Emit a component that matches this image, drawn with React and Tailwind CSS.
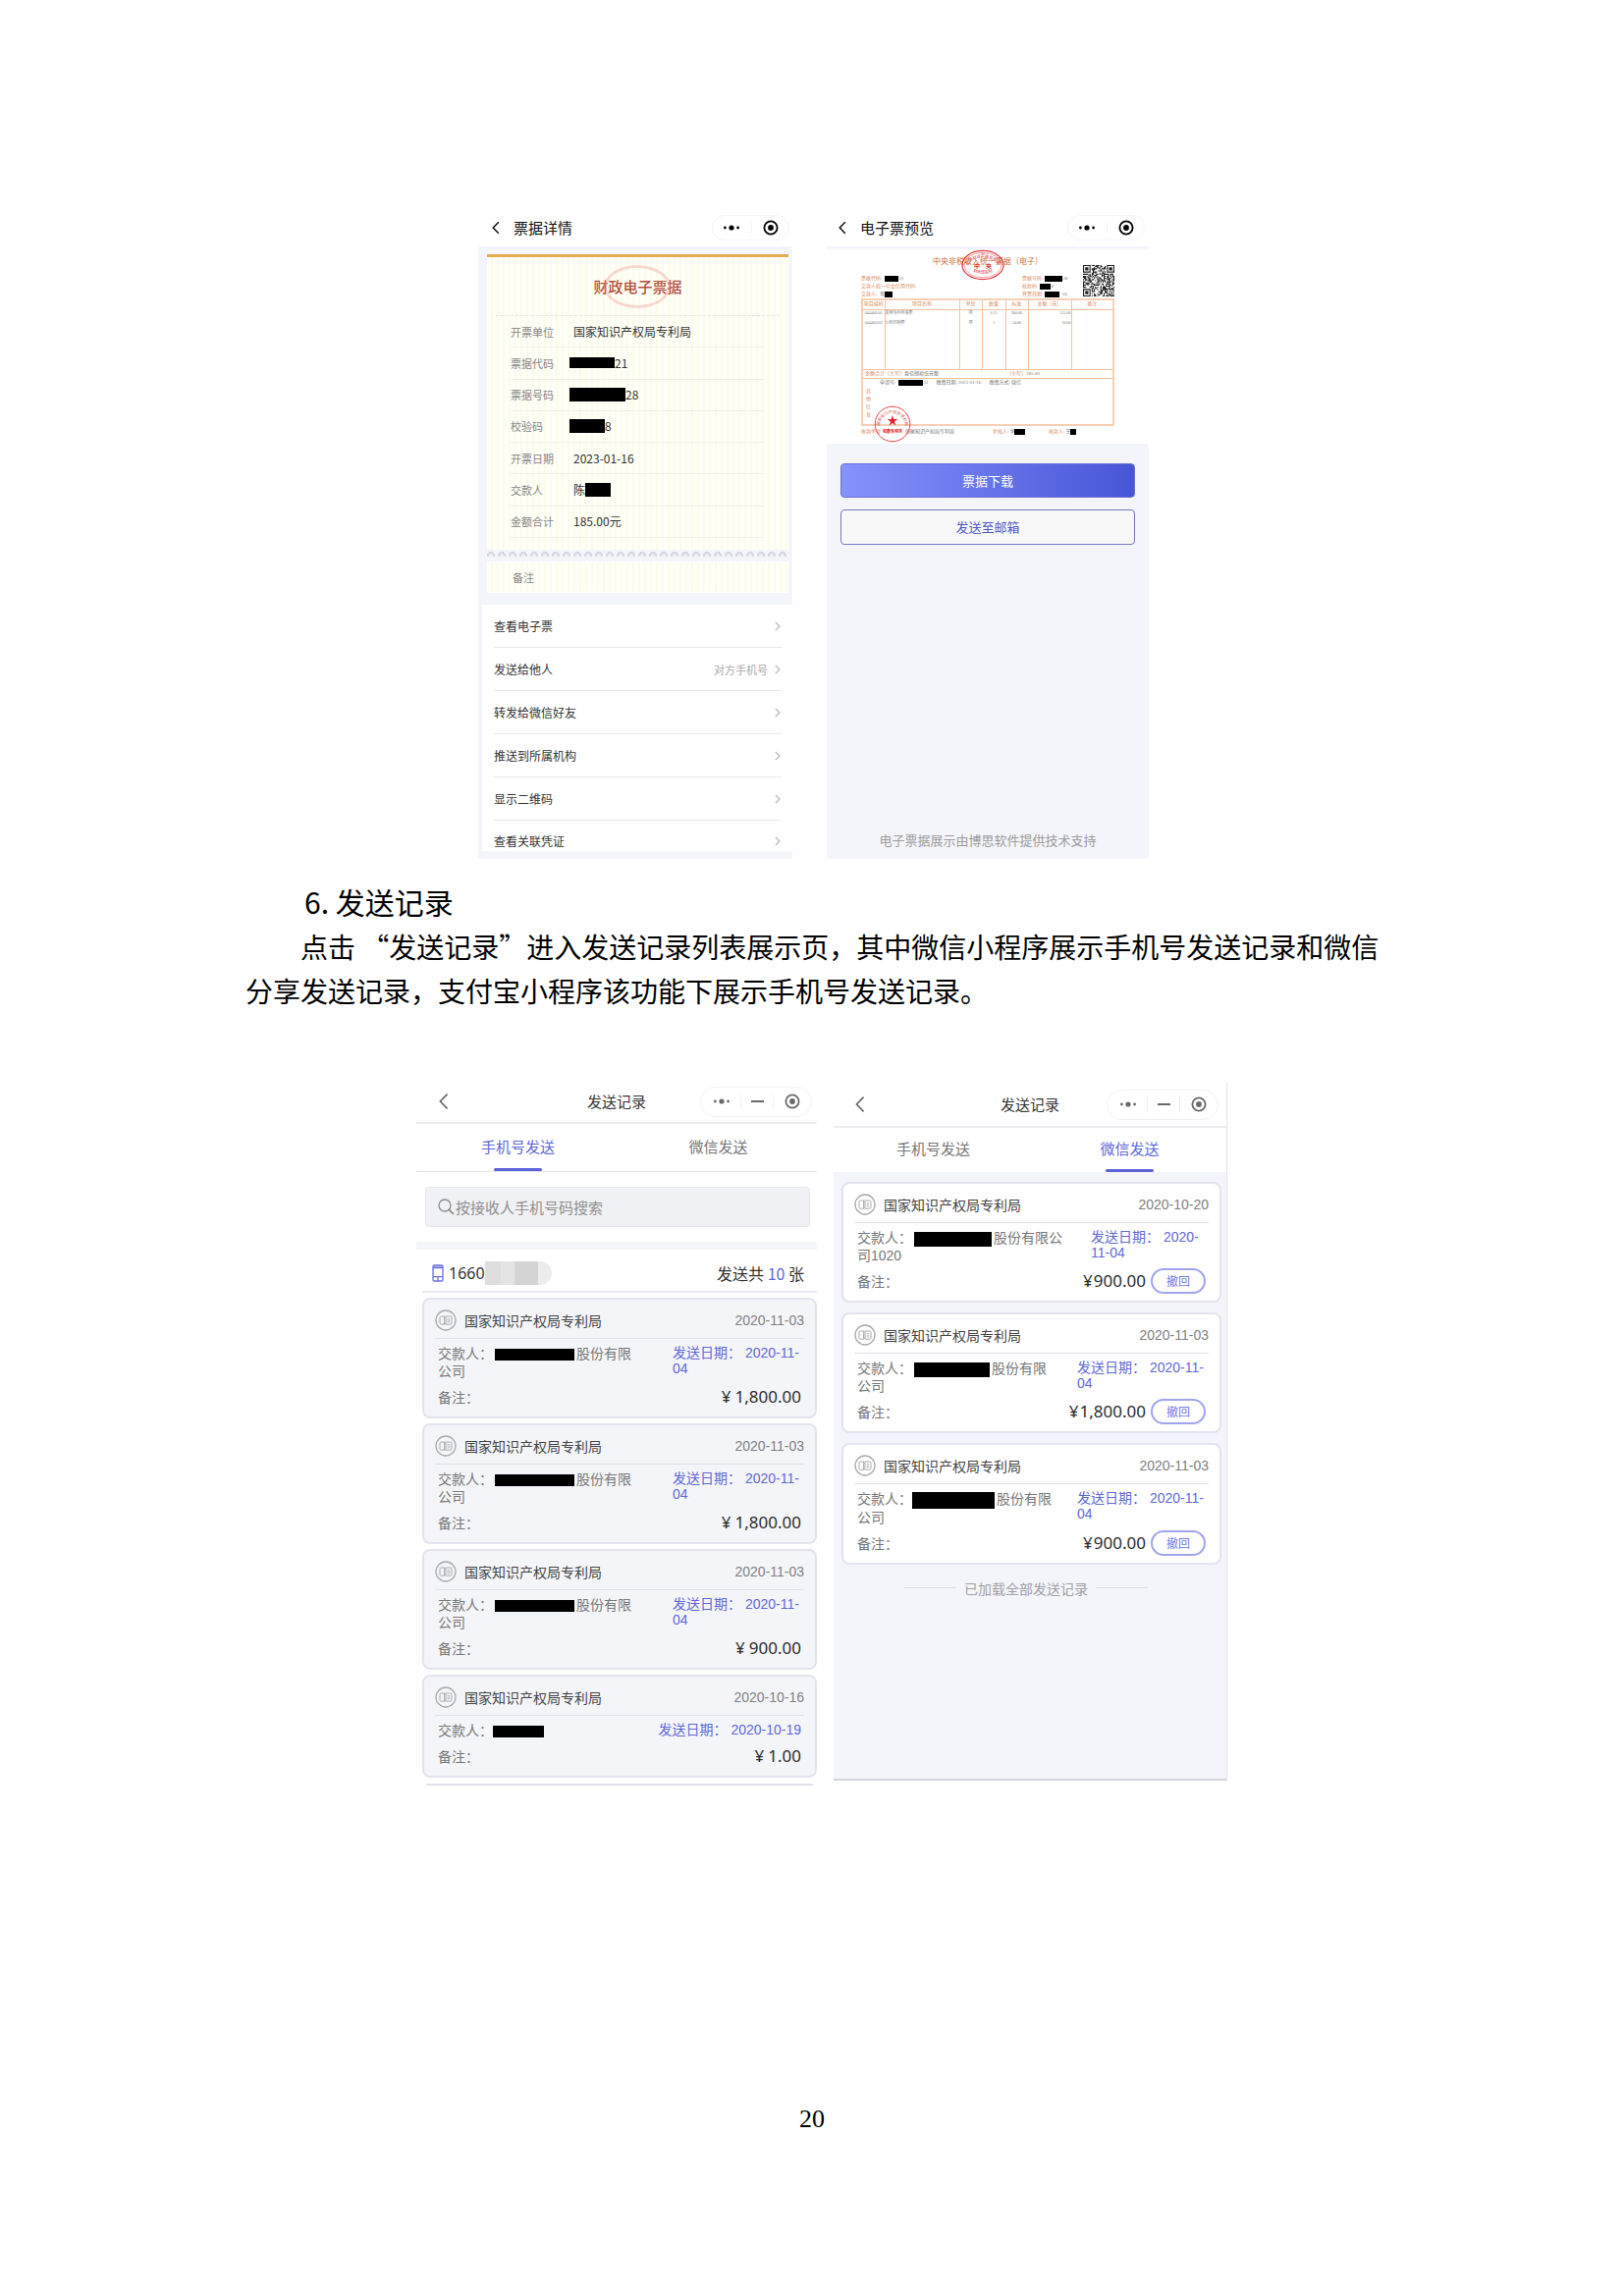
import React from "react";

const Redacted = ({ className }) => (
  <span className={"inline-block shrink-0 bg-black " + className} aria-hidden="true" />
);

const Target = ({ className }) => (
  <svg viewBox="0 0 18 18" className={"size-[18px] shrink-0 " + className} aria-hidden="true">
    <circle cx="9" cy="9" r="6.6" fill="none" stroke="currentColor" strokeWidth="1.8" />
    <circle cx="9" cy="9" r="2.9" fill="currentColor" />
  </svg>
);

const Dots = ({ className }) => (
  <svg viewBox="0 0 18 8" className={"h-2 w-[18px] shrink-0 " + className} aria-hidden="true">
    <circle cx="2.4" cy="4" r="1.4" fill="currentColor" />
    <circle cx="9" cy="4" r="2.6" fill="currentColor" />
    <circle cx="15.6" cy="4" r="1.4" fill="currentColor" />
  </svg>
);

const Back = ({ className }) => (
  <svg viewBox="0 0 10 18" className={"shrink-0 " + className} fill="none" stroke="currentColor" aria-hidden="true">
    <path d="M8.6 1.6 L1.4 9 L8.6 16.4" strokeWidth="1.7" />
  </svg>
);

const Next = () => (
  <svg viewBox="0 0 6 10" className="h-[10px] w-[6px] shrink-0 text-[#b5b5b5]" fill="none" stroke="currentColor" aria-hidden="true">
    <path d="M0.8 0.8 L5 5 L0.8 9.2" strokeWidth="1.2" />
  </svg>
);

/* ---------- invoice detail ---------- */

const details = [
  { label: "开票单位", pre: "国家知识产权局专利局" },
  { label: "票据代码", box: "h-[11px] w-[46px]", post: "21" },
  { label: "票据号码", box: "h-[14px] w-[57px]", post: "28" },
  { label: "校验码", box: "h-[14px] w-[36px]", post: "8" },
  { label: "开票日期", pre: "2023-01-16" },
  { label: "交款人", pre: "陈", box: "h-[14px] w-[26px]" },
  { label: "金额合计", pre: "185.00元" },
];

const actions = ["查看电子票", "发送给他人", "转发给微信好友", "推送到所属机构", "显示二维码", "查看关联凭证"];

const stripes =
  "bg-[repeating-linear-gradient(90deg,#fffffa_0px,#fffffa_4px,#fcfce6_4px,#fcfce6_6px)]";

function SmallHeader({ title, className }) {
  return (
    <header className={"flex h-[39px] items-center bg-white text-black " + className}>
      <button aria-label="返回" className="flex">
        <Back className="h-[14px] w-[8px]" />
      </button>
      <h2 className="ml-[14px] flex-1 text-[15px] leading-5 text-[#111]">{title}</h2>
      <div className="flex h-[26px] w-[79px] items-center justify-between rounded-full border border-[#f4f4f4] pr-[9px] pl-[10px]">
        <button aria-label="更多" className="flex"><Dots /></button>
        <span className="h-3 w-px bg-[#f2f2f2]" />
        <button aria-label="关闭" className="flex"><Target /></button>
      </div>
    </header>
  );
}

function InvoiceDetail() {
  return (
    <section className="w-full max-w-[320px] bg-[#f4f5fa] pb-2">
      <SmallHeader title="票据详情" className="pr-[3px] pl-[14px]" />
      <div className="mr-1 ml-[9px] pt-2">
        <div className={"border-t-3 border-[#e6ad55] " + stripes}>
          <div className="mx-[9px] flex h-[60px] items-center justify-center border-b border-dashed border-[#e4e4d8]">
            <div className="relative">
              <h3 className="text-[15px] leading-5 font-medium text-[#b5503f]">财政电子票据</h3>
              <span className="absolute top-1/2 left-1/2 h-[44px] w-[68px] -translate-x-1/2 -translate-y-1/2 rounded-[50%] border-3 border-[#ef8f86]/35" />
            </div>
          </div>
          <dl className="mr-[25px] ml-6 grid h-[226px] grid-rows-7">
            {details.map((d) => (
              <div key={d.label} className="flex items-center border-b border-[#f0f0e6]">
                <dt className="w-[60px] text-[11px] leading-4 text-[#858585]">{d.label}</dt>
                <dd className={"flex items-center text-[12px] leading-4 text-[#333] " + (d.pre ? "pl-1" : "")}>
                  {d.pre}
                  {d.box && <Redacted className={d.box} />}
                  {d.post}
                </dd>
              </div>
            ))}
          </dl>
          <div className="h-3" />
        </div>
        <div className="h-3 pt-[2px]">
          <div className="h-[5px] bg-[radial-gradient(circle_at_4px_4px,#eeeef4_0px,#eeeef4_2px,#d6d7e2_2px,#d6d7e2_4px,transparent_4px)] bg-[length:11px_5px] bg-repeat-x" />
        </div>
        <div className={"flex h-8 items-center border-y border-white pl-[26px] text-[11px] text-[#858585] " + stripes}>备注</div>
      </div>
      <ul className="mt-3 ml-1 bg-white pr-[11px] pl-3">
        {actions.map((a) => (
          <li key={a} className="group border-b border-[#e8e8e8] last:border-b-0">
            <button className="flex h-[43px] w-full items-center justify-between text-[12px] leading-4 text-[#333] group-last:h-[31px] group-last:pt-[11px]">
              {a}
              <span className="flex items-center gap-[7px] pr-px text-[11px] text-[#aaa]">
                {a === "发送给他人" && "对方手机号"}
                <Next />
              </span>
            </button>
          </li>
        ))}
      </ul>
    </section>
  );
}

/* ---------- invoice preview ---------- */

const QR_SIZE = 29;
const qrCells = (() => {
  const cells = [];
  let seed = 77;
  const finder = (x, y) => {
    for (const [fx, fy] of [[0, 0], [QR_SIZE - 7, 0], [0, QR_SIZE - 7]]) {
      const dx = x - fx;
      const dy = y - fy;
      if (dx >= -1 && dx <= 7 && dy >= -1 && dy <= 7) {
        if (dx < 0 || dy < 0 || dx > 6 || dy > 6) return 0;
        if (dx === 0 || dy === 0 || dx === 6 || dy === 6) return 1;
        return dx >= 2 && dx <= 4 && dy >= 2 && dy <= 4 ? 1 : 0;
      }
    }
    return -1;
  };
  for (let y = 0; y < QR_SIZE; y++) {
    for (let x = 0; x < QR_SIZE; x++) {
      seed = (seed * 1103515245 + 12345) % 2147483648;
      const f = finder(x, y);
      if (f === 1 || (f === -1 && seed / 2147483648 > 0.46)) cells.push(`M${x} ${y}h1v1h-1z`);
    }
  }
  return cells.join("");
})();

const OvalSeal = () => (
  <svg viewBox="0 0 44 32" className="h-8 w-11" fill="none" stroke="#e0383e" aria-hidden="true">
    <ellipse cx="22" cy="16" rx="21" ry="14.6" strokeWidth="1.2" />
    <ellipse cx="22" cy="16" rx="19" ry="12.7" strokeWidth="0.5" />
    <path id="ovalTop" d="M7 17 A15 8.6 0 0 1 37 17" stroke="none" />
    <path id="ovalBottom" d="M8 20 A15.5 8 0 0 0 36 20" stroke="none" />
    <g fill="#e0383e" stroke="none" fontSize="4">
      <text><textPath href="#ovalTop" startOffset="50%" textAnchor="middle">全国财政票据监制章</textPath></text>
      <text x="22" y="18.5" textAnchor="middle" fontSize="6" fontWeight="700">中　央</text>
      <text><textPath href="#ovalBottom" startOffset="50%" textAnchor="middle">财政部监制</textPath></text>
    </g>
  </svg>
);

const RoundSeal = () => (
  <svg viewBox="0 0 38 38" className="size-[38px]" fill="none" stroke="#e8474c" aria-hidden="true">
    <circle cx="19" cy="19" r="17.8" strokeWidth="1" />
    <path id="roundTop" d="M6.6 25 A13 13 0 1 1 31.4 25" stroke="none" />
    <path d="M19 10 L20.3 14 L24.4 14 L21 16.4 L22.3 20.4 L19 17.9 L15.7 20.4 L17 16.4 L13.6 14 L17.7 14 Z" fill="#e2232a" stroke="none" />
    <g fill="#e8474c" stroke="none" fontSize="4">
      <text><textPath href="#roundTop" startOffset="50%" textAnchor="middle">国家知识产权局专利局</textPath></text>
      <text x="19" y="28" textAnchor="middle" fontWeight="700" fill="#e2232a">收费专用章</text>
    </g>
  </svg>
);

const cell = "border-x border-[#f3c3a2] p-0 align-top font-normal";

function Receipt() {
  return (
    <div className="bg-white px-[35px] pt-2 pb-[9px] font-['Liberation_Serif','Noto_Sans_CJK_SC',serif] text-[5px] leading-[8px] text-[#d98a5c]">
      <div className="relative">
        <h3 className="text-center text-[8px] leading-[10px] text-[#c8703c]">中央非税收入统一票据（电子）</h3>
        <div className="absolute -top-2 left-[48%] -translate-x-1/2"><OvalSeal /></div>
      </div>
      <div className="flex h-8 items-end">
        <div className="flex-1">
          <p className="flex items-center">票据代码:<Redacted className="ml-[3px] h-[6px] w-[14px]" /><span className="text-[#777]">31</span></p>
          <p>交款人统一社会信用代码:</p>
          <p className="flex items-center">交款人:<span className="ml-[3px] text-[#777]">陈</span><Redacted className="h-[6px] w-2" /></p>
        </div>
        <div className="w-[62px]">
          <p className="flex items-center">票据号码:<Redacted className="ml-[2px] h-[6px] w-[18px]" /><span className="text-[#777]">28</span></p>
          <p className="flex items-center">校验码:<Redacted className="ml-[2px] h-[6px] w-[11px]" /><span className="text-[#777]">8</span></p>
          <p className="flex items-center">开票日期:<Redacted className="ml-[2px] h-[6px] w-[15px]" /><span className="ml-px text-[#777]">-16</span></p>
        </div>
        <div className="h-[34px] w-8 shrink-0">
          <svg viewBox="0 0 29 29" className="size-8" role="img" aria-label="二维码">
            <path d={qrCells} fill="#222" />
          </svg>
        </div>
      </div>
      <div className="relative">
        <div className="border-2 border-[#f6cfb4]">
          <table className="w-full table-fixed border-collapse text-center">
            <colgroup>
              <col className="w-[22px]" /><col className="w-[76px]" /><col className="w-[23px]" />
              <col className="w-[24px]" /><col className="w-[23px]" /><col className="w-[44px]" /><col />
            </colgroup>
            <thead>
              <tr className="h-[9px] border-b border-[#f3c3a2]">
                {["项目编码", "项目名称", "单位", "数量", "标准", "金额（元）", "备注"].map((h) => (
                  <th key={h} className={cell + " border-l-0 last:border-r-0"}>{h}</th>
                ))}
              </tr>
            </thead>
            <tbody className="text-[4px] leading-[6px] text-[#777]">
              <tr className="h-[11px]">
                <td className={cell + " border-l-0"}>044400101</td>
                <td className={cell + " text-left"}>发明专利申请费</td>
                <td className={cell}>项</td><td className={cell}>0.15</td><td className={cell}>900.00</td>
                <td className={cell + " text-right"}>135.00</td><td className={cell + " border-r-0"} />
              </tr>
              <tr className="h-[50px]">
                <td className={cell + " border-l-0"}>044400102</td>
                <td className={cell + " text-left"}>公布印刷费</td>
                <td className={cell}>项</td><td className={cell}>1</td><td className={cell}>50.00</td>
                <td className={cell + " text-right"}>50.00</td><td className={cell + " border-r-0"} />
              </tr>
            </tbody>
          </table>
          <div className="flex h-[10px] items-center border-y border-[#f3c3a2] pl-[2px]">
            金额合计（大写）<span className="w-[104px] text-[#777]">壹佰捌拾伍元整</span>（小写）<span className="text-[#777]">185.00</span>
          </div>
          <div className="flex h-[46px] pl-[3px]">
            <div className="flex w-[14px] flex-col justify-center pt-[3px]">
              {["其", "他", "信", "息"].map((c) => <span key={c}>{c}</span>)}
            </div>
            <p className="flex h-[8px] items-center text-[#777]">
              申请号:<Redacted className="ml-[3px] h-[6px] w-[25px]" />31
              <span className="ml-2">缴费日期: 2023-01-16</span>
              <span className="ml-2">缴费方式: 微信</span>
            </p>
          </div>
        </div>
        <div className="absolute -bottom-[17px] left-[13px]"><RoundSeal /></div>
      </div>
      <div className="mt-[2px] flex h-[7px] items-center">
        <p className="w-[134px]">收款单位（章）<span className="ml-[10px] text-[#777]">国家知识产权局专利局</span></p>
        <p className="flex w-[57px] items-center">复核人:<span className="ml-px text-[#777]">李</span><Redacted className="h-[6px] w-[11px]" /></p>
        <p className="flex items-center">收款人:<span className="ml-px text-[#777]">王</span><Redacted className="h-[6px] w-[6px]" /></p>
      </div>
    </div>
  );
}

function InvoicePreview() {
  return (
    <section className="flex w-full max-w-[328px] flex-col bg-[#f4f5fa]">
      <SmallHeader title="电子票预览" className="pr-1 pl-3" />
      <div className="pt-[3px]"><Receipt /></div>
      <div className="flex flex-1 flex-col px-[14px] pt-5">
        <button className="h-[35px] rounded border border-[#6a70d8] bg-linear-to-r from-[#8792fc] to-[#4756d6] text-[13px] text-white">票据下载</button>
        <button className="mt-3 h-[36px] rounded border border-[#7478c4] bg-[#f8f8f8] text-[13px] text-[#5058c8]">发送至邮箱</button>
        <p className="mt-auto pb-[9px] text-center text-[13px] leading-5 text-[#9a9a9a]">电子票据展示由博思软件提供技术支持</p>
      </div>
    </section>
  );
}

/* ---------- sending records ---------- */

function RecordsHeader({ className, backClassName }) {
  return (
    <header className={"grid grid-cols-[1fr_auto_1fr] items-center border-b-2 border-[#ececf0] bg-white text-[#6a6a6a] " + className}>
      <button aria-label="返回" className={"flex w-fit " + backClassName}>
        <Back className="h-[18px] w-[10px]" />
      </button>
      <h2 className="text-[15px] leading-5 text-[#333]">发送记录</h2>
      <div className="flex h-[31px] w-[114px] items-center justify-between justify-self-end rounded-full border border-[#f2f2f2] pr-[10px] pl-3">
        <button aria-label="更多" className="flex"><Dots /></button>
        <span className="h-4 w-px bg-[#efefef]" />
        <button aria-label="最小化" className="flex"><span className="h-[2px] w-[13px] bg-current" /></button>
        <span className="h-4 w-px bg-[#efefef]" />
        <button aria-label="关闭" className="flex"><Target /></button>
      </div>
    </header>
  );
}

function Tabs({ active, className }) {
  return (
    <div role="tablist" className={"grid grid-cols-2 bg-white " + className}>
      {["手机号发送", "微信发送"].map((t, i) => (
        <button
          key={t}
          role="tab"
          aria-selected={i === active}
          className={"flex flex-col items-center pl-[3px] text-[15px] leading-5 " + (i === active ? "text-[#5f68dc]" : "text-[#777]")}
        >
          <span className="flex flex-1 items-center">{t}</span>
          <span className={"h-[3px] w-[49px] rounded-full " + (i === active ? "bg-[#5b63d8]" : "bg-transparent")} />
        </button>
      ))}
    </div>
  );
}

const Badge = () => (
  <svg viewBox="0 0 22 22" className="size-[22px] shrink-0" fill="none" stroke="#a9a9ae" aria-hidden="true">
    <circle cx="11" cy="11" r="10" strokeWidth="1.3" />
    <path d="M9.6 7 H6.4 Q5 7 5 8.4 V13.8 Q5 15.2 6.4 15.2 H9.6 Z M9.6 7 L11 8 V14.2 L9.6 15.2 M11 7 H15.6 Q17 7 17 8.4 V13.8 Q17 15.2 15.6 15.2 H11" strokeWidth="1" />
    <path d="M12.6 9.6 H15.2 M12.6 11.2 H15.2 M12.6 12.8 H15.2" strokeWidth="0.8" />
  </svg>
);

function RecordCard({ date, box, payer, sent, sentWidth, payerWidth, amount, revocable }) {
  return (
    <article className={"rounded-lg border-2 border-[#e2e3ec] px-[11px] pt-[2px] pb-2 " + (revocable ? "bg-white" : "bg-[#f4f5f9]")}>
      <div className="flex h-[38px] items-center border-b border-[#dfe0e8]">
        <Badge />
        <h3 className="ml-2 flex-1 text-[14px] leading-5 text-[#444]">国家知识产权局专利局</h3>
        <time className="font-['Liberation_Sans','Noto_Sans_CJK_SC',sans-serif] text-[14px] leading-5 text-[#808080]">{date}</time>
      </div>
      <div className="flex justify-between px-[3px] pt-[6px] font-['Liberation_Sans','Noto_Sans_CJK_SC',sans-serif] text-[14px]">
        <p className={"leading-[18px] text-[#777] " + payerWidth}>
          交款人：<Redacted className={"mr-[2px] align-middle " + box} />{payer}
        </p>
        <p className={"leading-4 text-[#6068d8] " + sentWidth}>发送日期： {sent}</p>
      </div>
      <div className="mt-[5px] flex h-6 items-center justify-between px-[3px]">
        <p className="text-[14px] leading-5 text-[#777]">备注：</p>
        <div className="flex items-center gap-[5px]">
          <p className={"flex items-center font-['Noto_Sans',sans-serif] text-[17px] leading-6 text-[#2d2d2d] " + (revocable ? "gap-px" : "gap-1")}>
            <span>¥</span><span>{amount}</span>
          </p>
          {revocable && (
            <button className="h-[26px] w-14 rounded-full border-2 border-[#a0a4ee] text-[12px] leading-4 text-[#7479e4]">撤回</button>
          )}
        </div>
      </div>
    </article>
  );
}

const phoneRecords = [
  { date: "2020-11-03", amount: "1,800.00" },
  { date: "2020-11-03", amount: "1,800.00" },
  { date: "2020-11-03", amount: "900.00" },
].map((r) => ({
  ...r,
  sent: "2020-11-04",
  box: "ml-[2px] h-3 w-[81px]",
  payer: "股份有限公司",
  payerWidth: "w-[204px]",
  sentWidth: "w-[131px]",
}));
phoneRecords.push({ date: "2020-10-16", amount: "1.00", sent: "2020-10-19", box: "h-3 w-[52px]", payer: "", payerWidth: "", sentWidth: "" });

const wechatRecords = [
  { date: "2020-10-20", amount: "900.00", sent: "2020-11-04", box: "ml-[2px] h-[15px] w-[79px]", payer: "股份有限公司1020", payerWidth: "w-[214px]", sentWidth: "w-[117px]" },
  { date: "2020-11-03", amount: "1,800.00", sent: "2020-11-04", box: "ml-[2px] h-[15px] w-[77px]", payer: "股份有限公司", payerWidth: "w-[202px]", sentWidth: "w-[131px]" },
  { date: "2020-11-03", amount: "900.00", sent: "2020-11-04", box: "h-[17px] w-[84px]", payer: "股份有限公司", payerWidth: "w-[204px]", sentWidth: "w-[131px]" },
];

function PhoneRecords() {
  return (
    <section className="w-full max-w-[408px] bg-white">
      <RecordsHeader className="h-[42px] px-[5px] pb-[2px]" backClassName="ml-[18px]" />
      <Tabs active={0} className="h-[49px] border-b border-[#e4e4ea]" />
      <div className="pt-[15px] pr-[7px] pl-[9px]">
        <label className="flex h-[41px] items-center rounded border border-[#e6e7ec] bg-[#f0f1f4] pl-3 text-[#8a8a8a]">
          <svg viewBox="0 0 17 17" className="size-[17px] shrink-0" fill="none" stroke="currentColor" strokeWidth="1.3" aria-hidden="true">
            <circle cx="7" cy="7" r="6" /><path d="M11.4 11.4 L16 16" strokeWidth="1.7" />
          </svg>
          <input
            type="text"
            aria-label="按接收人手机号码搜索"
            placeholder="按接收人手机号码搜索"
            className="min-w-0 flex-1 bg-transparent pl-px text-[15px] leading-6 outline-none placeholder:text-[#8f8f8f]"
          />
        </label>
      </div>
      <div className="mt-[15px] h-2 bg-[#f4f5f9]" />
      <div className="ml-[6px] flex h-[44px] items-center border-b-2 border-[#e8e8ee] pt-[5px] pr-[13px] pl-[10px] text-[16px] leading-5 text-[#333]">
        <svg viewBox="0 0 12 18" className="h-[18px] w-3 shrink-0" fill="none" stroke="#6a72e0" strokeWidth="1.3" aria-hidden="true">
          <rect x="1" y="1" width="10" height="16" rx="1.2" />
          <path d="M1 3.6 H11 M1 12.6 H11 M6 12.6 V17" />
          <path d="M1 2.4 H11" strokeWidth="1.6" opacity="0.6" />
        </svg>
        <span className="ml-[5px] font-['Noto_Sans',sans-serif]">1660</span>
        <span className="flex h-6 w-[68px] overflow-hidden rounded-r-full" aria-hidden="true">
          <span className="flex-1 bg-[#eaeaea]" /><span className="w-4 bg-[#dedede]" />
          <span className="w-[14px] bg-[#e4e4e4]" /><span className="w-6 bg-[#d4d4d4]" /><span className="w-[14px] bg-[#ececec]" />
        </span>
        <p className="ml-auto">发送共 <span className="text-[#5f68dc]">10</span> 张</p>
      </div>
      <div className="flex flex-col gap-[5px] pt-[5px] pl-[6px]">
        {phoneRecords.map((r, i) => <RecordCard key={i} {...r} />)}
      </div>
      <div className="mt-[6px] mr-1 ml-[10px] h-[2px] bg-[#dfe0e8]" />
    </section>
  );
}

function WechatRecords() {
  return (
    <section className="min-h-[711px] w-full max-w-[401px] border-r border-b-2 border-r-[#e6e7ef] border-b-[#d3d4dc] bg-[#f4f5fa]">
      <RecordsHeader className="h-[46px] px-2" backClassName="ml-[14px]" />
      <Tabs active={1} className="h-[45px]" />
      <div className="flex flex-col gap-[10px] pt-[10px] pr-[5px] pl-2">
        {wechatRecords.map((r, i) => <RecordCard key={i} revocable {...r} />)}
      </div>
      <p className="mt-[14px] flex items-center justify-center gap-2 pr-2 text-[14px] leading-5 text-[#a0a0a4]">
        <span className="h-px w-[53px] bg-[#dcdce2]" />已加载全部发送记录<span className="h-px w-[53px] bg-[#dcdce2]" />
      </p>
    </section>
  );
}

export default function App() {
  return (
    <main lang="zh-CN" className="min-h-screen bg-white pt-[212px] pb-[160px] font-['Noto_Sans_CJK_SC',sans-serif] text-black">
      <div className="flex justify-center gap-[35px] pl-[3px]">
        <InvoiceDetail />
        <InvoicePreview />
      </div>
      <div className="mt-5 pr-[240px] pl-[250px]">
        <h1 className="pl-[60px] text-[30px] leading-[46px]">6. 发送记录</h1>
        <p className="mt-px indent-[56px] text-[28px] leading-[45px]">
          点击 “发送记录”进入发送记录列表展示页，其中微信小程序展示手机号发送记录和微信分享发送记录，支付宝小程序该功能下展示手机号发送记录。
        </p>
      </div>
      <div className="mt-[71px] flex items-start justify-center gap-[17px] pl-5">
        <PhoneRecords />
        <WechatRecords />
      </div>
      <footer className="mt-[324px] text-center font-['Liberation_Serif',serif] text-[26px] leading-8">20</footer>
    </main>
  );
}
